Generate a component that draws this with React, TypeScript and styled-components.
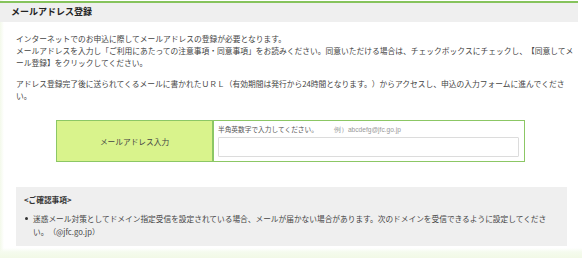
import React from "react";
import styled, { createGlobalStyle } from "styled-components";

const Global = createGlobalStyle`
  html, body { margin: 0; padding: 0; background: #ffffff; }
  body {
    font-family: "Noto Sans CJK JP", "Noto Sans", sans-serif;
    color: #333333;
    text-spacing-trim: space-all;
  }
`;

const Page = styled.div`
  width: 582px;
  height: 258px;
  box-sizing: border-box;
  padding-top: 1px;
  overflow: hidden;
  background: linear-gradient(to bottom, rgba(255,255,255,0) 248px, #f5fbee 252px, #f2f9e6 258px),
    linear-gradient(to right, #f3f9ea 0px, #ffffff 4px);
`;

const Header = styled.h2`
  margin: 0 4px 0 0;
  height: 21px;
  box-sizing: border-box;
  border-top: 2px solid #86c35c;
  background: #efefef;
  padding-left: 11px;
  font-size: 9px;
  font-weight: bold;
  line-height: 18px;
  color: #222;
`;

const Content = styled.div`
  padding: 0 12px 0 16px;
`;

const Para = styled.p<{ $top: number }>`
  margin: ${(p) => p.$top}px 0 0;
  font-size: 7.75px;
  line-height: 12px;
  color: #444;
`;

const Line = styled.span`
  display: block;
  white-space: nowrap;
`;

const FormTable = styled.div`
  margin: 18px 0 0 40px;
  width: 469px;
  height: 42px;
  display: grid;
  grid-template-columns: 157px 1fr;
  border: 1px solid #8cc765;
  box-sizing: border-box;
`;

const LabelCell = styled.div`
  background: #d9f38c;
  border-right: 2px solid #8cc765;
  display: flex;
  align-items: center;
  justify-content: center;
  font-size: 7.7px;
  color: #444;
`;

const InputCell = styled.div`
  background: #fff;
  padding: 4px 4px 3px 4px;
  display: flex;
  flex-direction: column;
  gap: 3px;
`;

const Hint = styled.div`
  font-size: 6.7px;
  line-height: 9px;
  color: #555;
  white-space: nowrap;
`;

const Example = styled.span`
  margin-left: 16px;
  font-size: 6.6px;
  color: #999;
  font-family: "Liberation Sans", Arial, sans-serif;
`;

const Input = styled.div`
  height: 20px;
  border: 1px solid #dcdcdc;
  box-sizing: border-box;
  border-radius: 1px;
  margin-right: 1px;
`;

const Notice = styled.div`
  margin-top: 25px;
  width: 551px;
  height: 59px;
  box-sizing: border-box;
  background: #efefef;
  padding: 7px 8px 0 8px;
`;

const NoticeTitle = styled.div`
  font-size: 7.7px;
  font-weight: bold;
  line-height: 12px;
  color: #333;
`;

const List = styled.ul`
  margin: 6px 0 0;
  padding: 0 0 0 9px;
  list-style: none;
`;

const Item = styled.li`
  position: relative;
  font-size: 7.7px;
  line-height: 13px;
  color: #444;
  &::before {
    content: "";
    position: absolute;
    left: -8px;
    top: 5px;
    width: 3px;
    height: 3px;
    border-radius: 50%;
    background: #333;
  }
`;

export default function App() {
  return (
    <>
      <Global />
      <Page>
        <Header>メールアドレス登録</Header>
        <Content>
          <Para $top={11}>
            <Line>インターネットでのお申込に際してメールアドレスの登録が必要となります。</Line>
            <Line>
              メールアドレスを入力し「ご利用にあたっての注意事項・同意事項」をお読みください。同意いただける場合は、チェックボックスにチェックし、【同意してメ
            </Line>
            <Line>ール登録】をクリックしてください。</Line>
          </Para>
          <Para $top={9}>
            <Line>
              アドレス登録完了後に送られてくるメールに書かれたＵＲＬ（有効期間は発行から24時間となります。）からアクセスし、申込の入力フォームに進んでくださ
            </Line>
            <Line>い。</Line>
          </Para>
          <FormTable>
            <LabelCell>メールアドレス入力</LabelCell>
            <InputCell>
              <Hint>
                半角英数字で入力してください。<Example>例）abcdefg@jfc.go.jp</Example>
              </Hint>
              <Input />
            </InputCell>
          </FormTable>
          <Notice>
            <NoticeTitle>&lt;ご確認事項&gt;</NoticeTitle>
            <List>
              <Item>
                <Line>
                  迷惑メール対策としてドメイン指定受信を設定されている場合、メールが届かない場合があります。次のドメインを受信できるように設定してくださ
                </Line>
                <Line>い。（@jfc.go.jp）</Line>
              </Item>
            </List>
          </Notice>
        </Content>
      </Page>
    </>
  );
}
